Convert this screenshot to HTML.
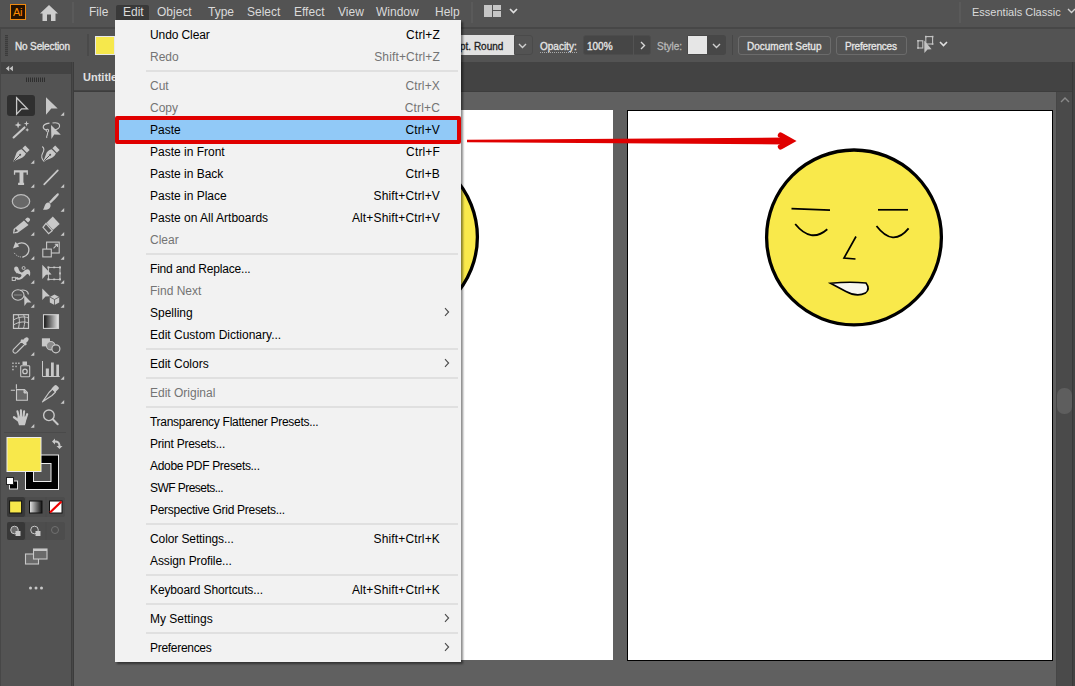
<!DOCTYPE html>
<html><head><meta charset="utf-8">
<style>
*{margin:0;padding:0;box-sizing:border-box}
html,body{width:1075px;height:686px;overflow:hidden;background:#535353;font-family:"Liberation Sans",sans-serif;position:relative}
.a{position:absolute}
#top{left:0;top:0;width:1075px;height:27px;background:#535353}
#topline{left:0;top:27px;width:1075px;height:2px;background:#474747}
.mb{position:absolute;top:4px;font-size:12px;color:#dadada;line-height:16px;white-space:nowrap}
#ctrl{left:0;top:29px;width:1075px;height:33px;background:#535353;border-left:1px solid #474747}
.ct{position:absolute;font-size:10px;color:#e6e6e6;line-height:12px;white-space:nowrap;-webkit-text-stroke:0.3px currentColor}
#panel{left:0;top:62px;width:71px;height:624px;background:#535353;border-left:1px solid #474747}
#pstrip{left:71px;top:62px;width:3px;height:624px;background:#474747;border-left:1px solid #3e3e3e;border-right:1px solid #3c3c3c}
#panelhd{left:1px;top:62px;width:70px;height:12px;background:#434343}
#tabbar{left:73px;top:62px;width:1002px;height:30px;background:#434343;border-bottom:1px solid #3d3d3d}
#tab{left:74px;top:62px;width:200px;height:28px;background:#535353}
#canvas{left:74px;top:92px;width:982px;height:594px;background:#606060}
#scroll{left:1056px;top:92px;width:16px;height:594px;background:#4a4a4a;border-left:1px solid #464646}
#rstrip{left:1072px;top:62px;width:3px;height:624px;background:#434343;border-left:1px solid #393939}
#menu{left:115px;top:20px;width:346px;height:642px;background:#f2f2f2;box-shadow:2px 2px 2px rgba(0,0,0,.45)}
.mi{position:absolute;left:0;width:346px;height:22px;font-size:12px;line-height:22px;color:#000;white-space:nowrap}
.mi .l{position:absolute;left:35px;top:1px}
.mi .r{position:absolute;right:21px;top:1px;letter-spacing:0.15px}
.mi.d{color:#747474}
.sep{position:absolute;left:31px;width:312px;height:2px;background:#e0e0e0}
.chev{position:absolute;left:329px;top:6px}
.hl{position:absolute;left:2px;top:0;width:342px;height:22px;background:#91c9f7}
.btn{position:absolute;border:1px solid #6b6b6b;border-radius:3px;height:19px}

</style></head><body>
<div id="top" class="a"></div>
<div id="topline" class="a"></div>
<!-- Ai logo -->
<div class="a" style="left:10px;top:4px;width:16px;height:16px;background:#261200;border:1px solid #f08a10"></div>
<div class="a" style="left:13px;top:5px;font-size:11px;color:#ff8c00;line-height:14px;letter-spacing:-0.3px">Ai</div>
<!-- home -->
<svg class="a" style="left:39px;top:4px" width="20" height="18" viewBox="0 0 20 18"><path d="M10 1 L19 9.5 L16.5 9.5 L16.5 17 L12 17 L12 10.5 L8 10.5 L8 17 L3.5 17 L3.5 9.5 L1 9.5 Z" fill="#cdcdcd"/></svg>
<div class="a" style="left:72px;top:2px;width:2px;height:21px;background:#5a5a5a"></div>
<div class="mb" style="left:89px">File</div>
<div class="a" style="left:116px;top:5px;width:33px;height:16px;background:#393939;border-radius:2px 2px 0 0"></div>
<div class="mb" style="left:123px">Edit</div>
<div class="mb" style="left:157px">Object</div>
<div class="mb" style="left:208px">Type</div>
<div class="mb" style="left:247px">Select</div>
<div class="mb" style="left:294px">Effect</div>
<div class="mb" style="left:338px">View</div>
<div class="mb" style="left:376px">Window</div>
<div class="mb" style="left:435px">Help</div>
<div class="a" style="left:471px;top:2px;width:2px;height:21px;background:#5a5a5a"></div>
<!-- layout icon -->
<div class="a" style="left:484px;top:5px;width:8px;height:12px;background:#c6c6c6"></div>
<div class="a" style="left:493px;top:5px;width:8px;height:5px;background:#c6c6c6"></div>
<div class="a" style="left:493px;top:11px;width:8px;height:6px;background:#c6c6c6"></div>
<svg class="a" style="left:509px;top:8px" width="9" height="6" viewBox="0 0 9 6"><path d="M1 1 L4.5 4.5 L8 1" fill="none" stroke="#e0e0e0" stroke-width="1.7"/></svg>
<div class="a" style="left:959px;top:2px;width:2px;height:21px;background:#5a5a5a"></div>
<div class="mb" style="left:972px;font-size:11px">Essentials Classic</div>
<svg class="a" style="left:1067px;top:8px" width="9" height="6" viewBox="0 0 9 6"><path d="M1 1 L4.5 4.5 L8 1" fill="none" stroke="#d0d0d0" stroke-width="1.4"/></svg>

<div id="ctrl" class="a"></div>
<div class="a" style="left:5px;top:35px;width:3px;height:21px;background:repeating-linear-gradient(#3c3c3c 0 1px,#4a4a4a 1px 2px)"></div>
<div class="ct" style="left:15px;top:41px;letter-spacing:-0.15px">No Selection</div>
<div class="a" style="left:87px;top:34px;width:2px;height:22px;background:#4a4a4a"></div>
<div class="a" style="left:95px;top:36px;width:20px;height:19px;background:#f6e84c;border:1px solid #e8e8e8"></div>
<div class="a" style="left:300px;top:35px;width:215px;height:20px;background:#e1e1e1"></div>
<div class="ct" style="left:460px;top:41px;color:#1e1e1e">pt. Round</div>
<div class="btn" style="left:514px;top:35px;width:19px;height:20px;border-color:#4a4a4a;border-radius:0 3px 3px 0"></div>
<svg class="a" style="left:518px;top:43px" width="9" height="6" viewBox="0 0 9 6"><path d="M1 1 L4.5 4.5 L8 1" fill="none" stroke="#d0d0d0" stroke-width="1.4"/></svg>
<div class="ct" style="left:540px;top:41px;border-bottom:1px dotted #aaa;line-height:11px">Opacity:</div>
<div class="a" style="left:583px;top:35px;width:68px;height:20px;background:#464646;border:1px solid #4c4c4c;border-radius:3px"></div>
<div class="a" style="left:633px;top:35px;width:1px;height:20px;background:#535353"></div>
<div class="ct" style="left:587px;top:41px;color:#e8e8e8">100%</div>
<svg class="a" style="left:640px;top:41px" width="6" height="9" viewBox="0 0 6 9"><path d="M1 1 L4.5 4.5 L1 8" fill="none" stroke="#d8d8d8" stroke-width="1.4"/></svg>
<div class="ct" style="left:657px;top:41px;color:#b8b8b8">Style:</div>
<div class="a" style="left:687px;top:35px;width:39px;height:20px;background:#474747;border-radius:3px"></div>
<div class="a" style="left:688px;top:36px;width:19px;height:18px;background:#e6e6e6"></div>
<svg class="a" style="left:712px;top:43px" width="9" height="6" viewBox="0 0 9 6"><path d="M1 1 L4.5 4.5 L8 1" fill="none" stroke="#d0d0d0" stroke-width="1.4"/></svg>
<div class="a" style="left:732px;top:35px;width:1px;height:20px;background:#474747"></div>
<div class="btn" style="left:738px;top:36px;width:93px"></div>
<div class="ct" style="left:747px;top:41px">Document Setup</div>
<div class="btn" style="left:836px;top:36px;width:71px"></div>
<div class="ct" style="left:845px;top:41px;letter-spacing:-0.2px">Preferences</div>
<svg class="a" style="left:910px;top:30px" width="40" height="30" viewBox="0 0 40 30"><g fill="none" stroke="#c4c4c4" stroke-width="1.1"><rect x="8" y="10.8" width="4.8" height="7.2"/><rect x="15.8" y="6.6" width="6.8" height="7.4"/></g><g fill="#c4c4c4"><rect x="7.2" y="10" width="1.6" height="1.6"/><rect x="7.2" y="17.2" width="1.6" height="1.6"/><rect x="15" y="5.8" width="1.6" height="1.6"/><rect x="21.8" y="5.8" width="1.6" height="1.6"/><rect x="21.8" y="13.2" width="1.6" height="1.6"/></g><path d="M14.2 10.5 L21.6 19.2 L17.5 19.5 L14.4 23 Z" fill="#c4c4c4"/></svg>
<svg class="a" style="left:939px;top:41px" width="9" height="6" viewBox="0 0 9 6"><path d="M1 1 L4.5 4.5 L8 1" fill="none" stroke="#e0e0e0" stroke-width="1.6"/></svg>

<div id="tabbar" class="a"></div>
<div id="tab" class="a"></div>
<div class="a" style="left:83px;top:71px;font-size:11px;font-weight:bold;color:#e0e0e0;line-height:13px">Untitled</div>
<div id="canvas" class="a"></div>
<div id="scroll" class="a"></div>
<div id="rstrip" class="a"></div>
<svg class="a" style="left:1060px;top:96px" width="10" height="7" viewBox="0 0 10 7"><path d="M1 6 L5 2 L9 6" fill="none" stroke="#8a8a8a" stroke-width="1.4"/></svg>
<div class="a" style="left:1057px;top:388px;width:15px;height:26px;background:#5e5e5e;border-radius:7px"></div>

<!-- artboards -->
<div class="a" style="left:300px;top:110px;width:313px;height:550px;background:#fff"></div>
<div class="a" style="left:627px;top:110px;width:426px;height:551px;background:#fff;border:1px solid #000"></div>
<svg class="a" style="left:0;top:0" width="1075" height="686" viewBox="0 0 1075 686">
 <circle cx="390" cy="237" r="87.4" fill="#f9e94b" stroke="#000" stroke-width="3.3"/>
 <g>
 <circle cx="854" cy="237.4" r="87.4" fill="#f9e94b" stroke="#000" stroke-width="3.3"/>
 <path d="M791.5 208.6 L830 210.2" stroke="#000" stroke-width="1.7" fill="none"/>
 <path d="M878 209.8 L908 209.8" stroke="#000" stroke-width="1.7" fill="none"/>
 <path d="M795.2 224 Q811 243.5 827.3 229.2" stroke="#000" stroke-width="1.8" fill="none"/>
 <path d="M876.5 226 Q893 247.5 908.6 228.4" stroke="#000" stroke-width="1.8" fill="none"/>
 <path d="M856 236.5 L844 258 L855.5 259" stroke="#000" stroke-width="1.7" fill="none" stroke-linejoin="miter"/>
 <path d="M830.5 283.2 Q850 281.5 866 283 Q870.5 289 865.5 293 Q857 297.5 846 291.5 Z" fill="#f8f7ee" stroke="#000" stroke-width="1.6"/>
 </g>
</svg>

<!-- tools panel -->
<div id="panel" class="a"></div>
<div id="panelhd" class="a"></div>
<div id="pstrip" class="a"></div>
<svg class="a" style="left:0;top:0" width="74" height="686" viewBox="0 0 74 686">
<defs>
<linearGradient id="gg" x1="0" x2="1" y1="0" y2="0"><stop offset="0" stop-color="#111"/><stop offset="1" stop-color="#e8e8e8"/></linearGradient>
</defs>
<!-- panel header chevrons -->
<path d="M9.2 65.8 L5.8 68.5 L9.2 71.2 Z M12.9 65.8 L9.5 68.5 L12.9 71.2 Z" fill="#c4c4c4"/>
<!-- grip -->
<g stroke="#2e2e2e" stroke-width="1">
<path d="M26.5 77.5V82M28.5 77.5V82M30.5 77.5V82M32.5 77.5V82M34.5 77.5V82M36.5 77.5V82M38.5 77.5V82M40.5 77.5V82M42.5 77.5V82M44.5 77.5V82"/>
</g>
<!-- row1 -->
<rect x="7" y="95" width="28" height="21" rx="3" fill="#2f2f2f"/>
<path d="M16.6 97.8 L27.4 108.8 L21.6 108.8 L16.6 114.2 Z" fill="none" stroke="#c8c8c8" stroke-width="1.3" stroke-linejoin="miter"/>
<path d="M46 97.3 L57.7 108.4 L51.3 108.5 L46 114.8 Z" fill="#c8c8c8"/>
<g fill="#c8c8c8">
<path d="M64.2 112 L64.2 115.8 L60.6 115.8 Z"/>
<path d="M34.3 160 L34.3 163.8 L30.7 163.8 Z"/>
<path d="M34.3 184 L34.3 187.8 L30.7 187.8 Z"/><path d="M64.2 184 L64.2 187.8 L60.6 187.8 Z"/>
<path d="M34.3 208 L34.3 211.8 L30.7 211.8 Z"/><path d="M64.2 208 L64.2 211.8 L60.6 211.8 Z"/>
<path d="M34.3 232 L34.3 235.8 L30.7 235.8 Z"/><path d="M64.2 232 L64.2 235.8 L60.6 235.8 Z"/>
<path d="M34.3 256 L34.3 259.8 L30.7 259.8 Z"/><path d="M64.2 256 L64.2 259.8 L60.6 259.8 Z"/>
<path d="M34.3 280 L34.3 283.8 L30.7 283.8 Z"/><path d="M64.2 280 L64.2 283.8 L60.6 283.8 Z"/>
<path d="M34.3 304 L34.3 307.8 L30.7 307.8 Z"/><path d="M64.2 304 L64.2 307.8 L60.6 307.8 Z"/>
<path d="M34.3 352 L34.3 355.8 L30.7 355.8 Z"/>
<path d="M34.3 376 L34.3 379.8 L30.7 379.8 Z"/><path d="M64.2 376 L64.2 379.8 L60.6 379.8 Z"/>
<path d="M64.2 400 L64.2 403.8 L60.6 403.8 Z"/>
<path d="M34.3 424 L34.3 427.8 L30.7 427.8 Z"/>
</g>
<!-- row2 wand -->
<path d="M13.6 137.5 L24.5 127.4" stroke="#c8c8c8" stroke-width="2.1" stroke-linecap="round"/>
<path d="M18.1 121.6 L19 124.1 L21.5 125 L19 125.9 L18.1 128.4 L17.2 125.9 L14.7 125 L17.2 124.1 Z" fill="#c8c8c8"/>
<path d="M26.5 120.8 L27.2 122.9 L29.3 123.6 L27.2 124.3 L26.5 126.4 L25.8 124.3 L23.7 123.6 L25.8 122.9 Z" fill="#c8c8c8"/>
<path d="M27.2 128 L27.8 129.3 L29.1 129.9 L27.8 130.5 L27.2 131.8 L26.6 130.5 L25.3 129.9 L26.6 129.3 Z" fill="#c8c8c8"/>
<!-- lasso -->
<path d="M52.5 123 C57 122 59.8 123.5 59.6 126 C59.4 128 57.5 129.3 55 129.8 M49.5 123.1 C45.5 123.6 43.2 125 43.2 127 C43.2 128.5 44.5 129.6 46.5 130" fill="none" stroke="#c8c8c8" stroke-width="1.1"/>
<path d="M47.2 131.5 C45.8 131 45.8 129.3 47.2 129.2 C48.6 129.1 49 130.8 48 132 C47.2 133 47.8 134.5 46.8 136.2 C46.3 137 46.6 137.5 47.2 137.8" fill="none" stroke="#c8c8c8" stroke-width="1.1"/>
<path d="M51 125 L60.8 134.8 L54.2 134.4 L51.4 139 Z" fill="#c8c8c8"/>
<!-- row3 pen -->
<g fill="#c8c8c8">
<path d="M22.4 148.3 L26.8 152.7 L29.6 149.9 L25.2 145.5 Z"/>
<path d="M21.6 149.2 L26 153.6 C24.5 157 21 159 17 159.8 L13.2 161.8 L15.8 154.8 C16.5 151.5 18.5 150.2 21.6 149.2 Z"/>
<path d="M52.4 148.3 L56.8 152.7 L59.6 149.9 L55.2 145.5 Z"/>
<path d="M51.6 149.2 L56 153.6 C54.5 157 51 159 47 159.8 L43.2 161.8 L45.8 154.8 C46.5 151.5 48.5 150.2 51.6 149.2 Z"/>
</g>
<path d="M13.8 161.2 L19.8 155.2 M43.8 161.2 L49.8 155.2" stroke="#535353" stroke-width="1"/><circle cx="20.2" cy="154.8" r="1" fill="#535353"/><circle cx="50.2" cy="154.8" r="1" fill="#535353"/>
<path d="M42.3 146.5 C45 148.5 44 151 42.5 153.5 C41 156 41.5 159.5 44.4 161.4" fill="none" stroke="#c8c8c8" stroke-width="1.1"/>
<!-- row4 T -->
<path d="M13.9 170.2 H27.9 V174.7 H26.6 V172.5 H23.4 V182.8 H24.1 V184.9 H18.1 V182.8 H19.5 V172.5 H15.2 V174.7 H13.9 Z" fill="#c8c8c8"/>
<path d="M44.2 184.3 L57.8 170.4" stroke="#c8c8c8" stroke-width="1.7" stroke-linecap="round"/>
<!-- row5 ellipse -->
<ellipse cx="21" cy="201.5" rx="8.7" ry="6.8" fill="#686868" stroke="#bdbdbd" stroke-width="1.2"/>
<path d="M58.5 193.5 C59.5 194.5 58.5 196 50.5 203.5 L49 202 C56.5 194 57.5 192.5 58.5 193.5 Z" fill="#c8c8c8"/>
<path d="M48.5 202.5 C51 203.5 51.2 206.5 49.5 208.2 C47.8 209.8 44.8 209.8 43 209.8 C44.5 207.5 44.5 205 46 203.5 C46.8 202.7 47.8 202.3 48.5 202.5 Z" fill="#c8c8c8"/>
<!-- row6 pencil -->
<path d="M24 220.5 L28.5 225 L17.5 233 L13 233.6 L13.6 229 Z" fill="#c8c8c8"/>
<path d="M25 219.5 L26.5 218 C27.3 217.2 28.2 217.2 29 218 L29.5 218.5 C30.3 219.3 30.3 220.2 29.5 221 L28 222.5 Z" fill="#c8c8c8"/>
<path d="M14.2 232.4 L15.5 228.5 L18 231 Z" fill="#535353"/>
<path d="M52.8 216.4 L59.7 224.1 L53 230 L46.5 222.8 Z" fill="#c8c8c8"/>
<path d="M46 223.5 L52.3 230.6 L48.6 233.6 L43 227.3 Z" fill="none" stroke="#c8c8c8" stroke-width="1.2"/>
<!-- row7 rotate -->
<path d="M16.8 244.5 C20.5 241.8 26.5 242.3 28.5 247.5 C29.8 251.5 27.5 256 23 257" fill="none" stroke="#c8c8c8" stroke-width="1.3"/>
<path d="M23 257 C19 257.5 15 255 13.8 252" fill="none" stroke="#c8c8c8" stroke-width="1" stroke-dasharray="1 1.2"/>
<path d="M13 248.5 L15.5 241.8 L19.2 246.5 Z" fill="#c8c8c8"/>
<rect x="46.6" y="242.1" width="12.6" height="10.9" fill="none" stroke="#c8c8c8" stroke-width="1.1"/>
<rect x="42.8" y="249.1" width="8.5" height="7.8" fill="#535353" stroke="#c8c8c8" stroke-width="1.1"/>
<path d="M53.5 248.3 L57.2 244.4 M54.8 244.2 H57.5 V246.9" fill="none" stroke="#c8c8c8" stroke-width="1.1"/>
<!-- row8 warp -->
<path d="M14.5 270.5 C13.5 268 14.5 266.5 16.5 266.5 C18.5 266.8 18.3 269 19.5 271 C20.5 272.5 22 273 23.5 271.5 C25.5 269.5 27.5 268.5 29 269.8 C30.5 271 30.5 274 29.8 276.5 C29 274.5 28 273.5 26.5 274.5 C24.5 276 22.5 279.5 19 279.8 C17 280 15.8 279.2 15.5 277.5 L17.5 277 C18 278 19 278 20 277.5 C22 276.5 22 274.5 20 274 C18 273.5 16.5 274 16 272.5 Z" fill="#c8c8c8"/>
<rect x="12.2" y="277.3" width="3.2" height="3.2" fill="none" stroke="#c8c8c8" stroke-width="0.9"/>
<circle cx="23.6" cy="268" r="1.5" fill="none" stroke="#c8c8c8" stroke-width="0.9"/>
<path d="M42.3 264.8 L51.6 274.6 L46 274.8 L42.3 279 Z" fill="#c8c8c8"/>
<rect x="48.4" y="267.4" width="11.6" height="12" fill="none" stroke="#c8c8c8" stroke-width="0.9"/><g fill="#c8c8c8"><rect x="47.4" y="266.4" width="2" height="2"/><rect x="59" y="266.4" width="2" height="2"/><rect x="47.4" y="278.4" width="2" height="2"/><rect x="59" y="278.4" width="2" height="2"/><rect x="53.2" y="266.6" width="2" height="1.6"/><rect x="53.2" y="278.6" width="2" height="1.6"/><rect x="59.2" y="272.4" width="1.6" height="2"/></g>
<!-- row9 shape builder -->
<ellipse cx="18" cy="295" rx="6" ry="5.2" fill="none" stroke="#c8c8c8" stroke-width="1.1"/>
<path d="M20 290.5 C24 289 28.5 291 28.3 294.5" fill="none" stroke="#c8c8c8" stroke-width="1.1"/>
<path d="M14.5 295 H22" stroke="#c8c8c8" stroke-width="1.1" stroke-dasharray="1 1"/>
<path d="M24.1 294.9 L31.4 302.6 L27 302.5 L24.4 306 Z" fill="#c8c8c8"/>
<path d="M42.3 288.6 L50 296.3 L45.5 296.4 L42.3 300.1 Z" fill="#c8c8c8"/>
<path d="M54.5 294.5 L59.2 297 L59.2 302.5 L54.5 305 L49.8 302.5 L49.8 297 Z" fill="#c8c8c8"/>
<path d="M49.8 297 L54.5 299.5 L59.2 297 M54.5 299.5 V305" fill="none" stroke="#535353" stroke-width="0.8"/>
<!-- row10 mesh -->
<rect x="13.5" y="314.7" width="15" height="13.7" fill="none" stroke="#c8c8c8" stroke-width="1.2"/>
<path d="M13.5 320 C18 317 24 316 28.5 318 M13.5 325 C18 322 24 321 28.5 323 M18 314.7 C20 318 19.5 323 18.5 328.4 M23.5 314.7 C25.5 318 25 323 23.5 328.4" fill="none" stroke="#c8c8c8" stroke-width="1"/>
<rect x="43.5" y="314.7" width="15" height="13.7" fill="url(#gg)" stroke="#d0d0d0" stroke-width="1.1"/>
<!-- row11 eyedropper -->
<path d="M13.8 352.6 C12.5 351.5 12.8 350 14 348.8 L21.5 341.3 L24.7 344.5 L17.2 352 C16 353.3 14.8 353.6 13.8 352.6 Z" fill="none" stroke="#c8c8c8" stroke-width="1.1"/>
<path d="M20.5 340.5 L25.5 345.5 L27 344 L26 343 C28.5 341 29.5 339 28 337.8 C26.8 336.5 25 337.5 23 340 L22 339 Z" fill="#c8c8c8"/>
<rect x="41.9" y="338.3" width="8.1" height="8.1" fill="#c8c8c8"/>
<circle cx="50.7" cy="345.7" r="4.2" fill="#8a8a8a" stroke="#c8c8c8" stroke-width="1.1"/>
<circle cx="55.9" cy="348.8" r="4" fill="#535353" stroke="#c8c8c8" stroke-width="1.2"/>
<!-- row12 symbol sprayer -->
<g fill="#b8b8b8"><rect x="12.2" y="362.5" width="1.5" height="1.5"/><rect x="15.3" y="362.5" width="1.5" height="1.5"/><rect x="18.1" y="362.5" width="1.5" height="1.5"/><rect x="12.2" y="365.7" width="1.5" height="1.5"/><rect x="15.3" y="365.7" width="1.5" height="1.5"/><rect x="12.2" y="368.8" width="1.5" height="1.5"/></g>
<rect x="20.7" y="365.8" width="9" height="11" rx="0.8" fill="none" stroke="#c8c8c8" stroke-width="1.1"/>
<rect x="22.5" y="361.5" width="4.5" height="3.5" fill="#c8c8c8"/>
<circle cx="25" cy="371.4" r="2.2" fill="none" stroke="#c8c8c8" stroke-width="1.3"/>
<path d="M42.5 361 V376.5 H59.7" fill="none" stroke="#c8c8c8" stroke-width="1"/>
<rect x="45.8" y="368.5" width="3.1" height="8" fill="#c8c8c8"/>
<rect x="51" y="362.5" width="2.8" height="14" fill="#c8c8c8"/>
<rect x="56.3" y="364.6" width="2.7" height="11.9" fill="#c8c8c8"/>
<!-- row13 artboard -->
<path d="M10.8 390.2 H15 M16.4 384.2 V388.8" stroke="#c8c8c8" stroke-width="1.1"/>
<path d="M16.5 389.6 H24.5 L27.4 392.5 V400.2 H16.5 Z" fill="#686868" stroke="#c8c8c8" stroke-width="1.1"/>
<path d="M24 390 V393 H27" fill="#c8c8c8" stroke="#c8c8c8" stroke-width="1"/>
<path d="M42.5 401.8 L49 392.5 L52.5 389 L55.5 392 L52 395.5 Z" fill="none" stroke="#c8c8c8" stroke-width="1.2" stroke-linejoin="round"/>
<path d="M51.5 388.5 L54.5 385.5 C55.3 384.7 56 384.7 56.8 385.5 L58.3 387 C59.1 387.8 59.1 388.5 58.3 389.3 L55.3 392.3 Z" fill="#c8c8c8"/>
<!-- row14 hand -->
<g stroke="#c8c8c8" stroke-linecap="round" fill="none">
<path d="M14 417.2 L18.5 420.5" stroke-width="2.3"/>
<path d="M17.4 411.3 L18.9 417" stroke-width="2.1"/>
<path d="M20.9 410.2 L21.1 416.5" stroke-width="2.1"/>
<path d="M24.1 411.3 L23.5 416.8" stroke-width="2.1"/>
<path d="M27.2 414.2 L25.6 418.8" stroke-width="2.1"/>
</g>
<path d="M17.5 416.5 L26.5 416.5 L26.2 420.5 C25.8 422.5 25.3 424 24.8 425.2 L19 425.2 C18.5 423.5 17.8 421.5 17.3 419.5 Z" fill="#c8c8c8"/>
<circle cx="48.9" cy="415.3" r="5.3" fill="none" stroke="#c8c8c8" stroke-width="1.4"/>
<path d="M52.8 419.3 L57.7 424.3" stroke="#c8c8c8" stroke-width="2" stroke-linecap="round"/>
<!-- separator -->
<path d="M4 432.5 H66" stroke="#4a4a4a" stroke-width="1"/>
<!-- fill/stroke -->
<rect x="25" y="454.5" width="34" height="35.5" fill="#ececec"/>
<rect x="26" y="455.5" width="32" height="33.5" fill="#000"/>
<rect x="33" y="463" width="18.5" height="19" fill="#ececec"/>
<rect x="34" y="464" width="16.5" height="17" fill="#535353"/>
<rect x="6.5" y="437" width="35" height="35" fill="#ececec"/>
<rect x="7.5" y="438" width="33" height="33" fill="#f8e84b"/>
<!-- swap -->
<path d="M52 441.5 L55 438.5 L55 440.5 C58.5 440.5 60.5 442.5 60.5 446 L62.5 446 L59.5 449 L56.5 446 L58.5 446 C58.5 443.5 57.5 442.5 55 442.5 L55 444.5 Z" fill="#c8c8c8"/>
<!-- default -->
<rect x="9.5" y="481" width="8" height="8" fill="#000" stroke="#ddd" stroke-width="1"/>
<rect x="6.5" y="477.5" width="7" height="7" fill="#fff" stroke="#222" stroke-width="1"/>
<!-- color modes -->
<rect x="7" y="497" width="58" height="20" rx="2" fill="#4d4d4d"/>
<rect x="7" y="497" width="18" height="20" rx="2" fill="#383838"/>
<path d="M25.5 497 V517 M46 497 V517" stroke="#4a4a4a"/>
<rect x="9.6" y="501" width="12" height="12" fill="#f8e84b" stroke="#111" stroke-width="1"/>
<rect x="29.5" y="501" width="12.5" height="12" fill="url(#gg)" stroke="#111" stroke-width="1" transform="matrix(-1 0 0 1 71.5 0)"/>
<rect x="49.5" y="501" width="12.5" height="12" fill="#fff" stroke="#111" stroke-width="1"/>
<path d="M50 512.5 L61.5 501.5" stroke="#e00" stroke-width="2.2"/>
<!-- draw modes -->
<rect x="7" y="522" width="58" height="18" rx="2" fill="#4d4d4d"/>
<rect x="7" y="522" width="18" height="18" rx="2" fill="#383838"/>
<path d="M25.5 522 V540 M46 522 V540" stroke="#4a4a4a"/>
<circle cx="14.5" cy="530" r="3.8" fill="#6a6a6a" stroke="#c8c8c8" stroke-width="1"/>
<rect x="15.5" y="531" width="5" height="5" fill="#c8c8c8"/>
<circle cx="34.5" cy="530" r="3.8" fill="none" stroke="#c8c8c8" stroke-width="1"/>
<rect x="35.5" y="531" width="5" height="5" fill="#c8c8c8"/>
<circle cx="55" cy="530" r="3.5" fill="none" stroke="#707070" stroke-width="1"/>
<!-- screen mode -->
<rect x="25.5" y="554" width="13" height="10" fill="#6a6a6a" stroke="#c8c8c8" stroke-width="1.1"/>
<rect x="33.5" y="549" width="13.5" height="10" fill="#6a6a6a" stroke="#c8c8c8" stroke-width="1.1"/>
<rect x="33.5" y="549" width="13.5" height="2" fill="#c8c8c8"/>
<!-- dots -->
<circle cx="30.5" cy="588" r="1.5" fill="#c8c8c8"/><circle cx="36" cy="588" r="1.5" fill="#c8c8c8"/><circle cx="41.5" cy="588" r="1.5" fill="#c8c8c8"/>
</svg>


<!-- menu -->
<div id="menu" class="a">
<div class="mi" style="top:3px"><span class="l" style="letter-spacing:-0.1px">Undo Clear</span><span class="r">Ctrl+Z</span></div>
<div class="mi d" style="top:25px"><span class="l">Redo</span><span class="r">Shift+Ctrl+Z</span></div>
<div class="sep" style="top:50px"></div>
<div class="mi d" style="top:54px"><span class="l">Cut</span><span class="r">Ctrl+X</span></div>
<div class="mi d" style="top:76px"><span class="l">Copy</span><span class="r">Ctrl+C</span></div>
<div class="hl" style="top:98px"></div>
<div class="mi" style="top:98px"><span class="l">Paste</span><span class="r">Ctrl+V</span></div>
<div class="mi" style="top:120px"><span class="l">Paste in Front</span><span class="r">Ctrl+F</span></div>
<div class="mi" style="top:142px"><span class="l">Paste in Back</span><span class="r">Ctrl+B</span></div>
<div class="mi" style="top:164px"><span class="l">Paste in Place</span><span class="r">Shift+Ctrl+V</span></div>
<div class="mi" style="top:186px"><span class="l">Paste on All Artboards</span><span class="r">Alt+Shift+Ctrl+V</span></div>
<div class="mi d" style="top:208px"><span class="l">Clear</span></div>
<div class="sep" style="top:233px"></div>
<div class="mi" style="top:237px"><span class="l" style="letter-spacing:-0.19px">Find and Replace...</span></div>
<div class="mi d" style="top:259px"><span class="l">Find Next</span></div>
<div class="mi" style="top:281px"><span class="l">Spelling</span><svg class="chev" width="6" height="10" viewBox="0 0 6 10"><path d="M1 1.2 L4.6 5 L1 8.8" fill="none" stroke="#4a4a4a" stroke-width="1.1"/></svg></div>
<div class="mi" style="top:303px"><span class="l">Edit Custom Dictionary...</span></div>
<div class="sep" style="top:328px"></div>
<div class="mi" style="top:332px"><span class="l">Edit Colors</span><svg class="chev" width="6" height="10" viewBox="0 0 6 10"><path d="M1 1.2 L4.6 5 L1 8.8" fill="none" stroke="#4a4a4a" stroke-width="1.1"/></svg></div>
<div class="sep" style="top:357px"></div>
<div class="mi d" style="top:361px"><span class="l">Edit Original</span></div>
<div class="sep" style="top:386px"></div>
<div class="mi" style="top:390px"><span class="l" style="letter-spacing:-0.28px">Transparency Flattener Presets...</span></div>
<div class="mi" style="top:412px"><span class="l" style="letter-spacing:-0.23px">Print Presets...</span></div>
<div class="mi" style="top:434px"><span class="l" style="letter-spacing:-0.32px">Adobe PDF Presets...</span></div>
<div class="mi" style="top:456px"><span class="l" style="letter-spacing:-0.55px">SWF Presets...</span></div>
<div class="mi" style="top:478px"><span class="l" style="letter-spacing:-0.29px">Perspective Grid Presets...</span></div>
<div class="sep" style="top:503px"></div>
<div class="mi" style="top:507px"><span class="l" style="letter-spacing:-0.1px">Color Settings...</span><span class="r">Shift+Ctrl+K</span></div>
<div class="mi" style="top:529px"><span class="l" style="letter-spacing:-0.1px">Assign Profile...</span></div>
<div class="sep" style="top:554px"></div>
<div class="mi" style="top:558px"><span class="l" style="letter-spacing:-0.12px">Keyboard Shortcuts...</span><span class="r">Alt+Shift+Ctrl+K</span></div>
<div class="sep" style="top:583px"></div>
<div class="mi" style="top:587px"><span class="l">My Settings</span><svg class="chev" width="6" height="10" viewBox="0 0 6 10"><path d="M1 1.2 L4.6 5 L1 8.8" fill="none" stroke="#4a4a4a" stroke-width="1.1"/></svg></div>
<div class="sep" style="top:612px"></div>
<div class="mi" style="top:616px"><span class="l" style="letter-spacing:-0.3px">Preferences</span><svg class="chev" width="6" height="10" viewBox="0 0 6 10"><path d="M1 1.2 L4.6 5 L1 8.8" fill="none" stroke="#4a4a4a" stroke-width="1.1"/></svg></div>
</div>

<!-- red highlight box -->
<div class="a" style="left:115px;top:116px;width:346px;height:28px;border:4px solid #e00000;border-radius:2px"></div>
<svg class="a" style="left:0;top:0" width="1075" height="686" viewBox="0 0 1075 686">
 <path d="M467 139.8 L786 137.6 L786 144.4 L467 142.2 Z" fill="#e00000"/>
 <path d="M780.5 135.2 L791 141 L780.5 146.8" fill="none" stroke="#e00000" stroke-width="5.4" stroke-linecap="round" stroke-linejoin="miter"/>
</svg>

</body></html>
